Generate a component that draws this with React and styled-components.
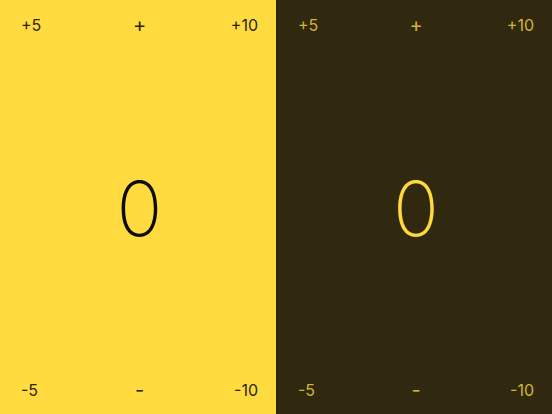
import React from "react";
import styled, { createGlobalStyle } from "styled-components";

const Global = createGlobalStyle`
  html, body {
    margin: 0;
    padding: 0;
  }
  body {
    font-family: Inter, "Noto Sans", sans-serif;
  }
`;

const Screen = styled.div`
  display: grid;
  grid-template-columns: 276px 276px;
  height: 414px;
  width: 552px;
  overflow: hidden;
`;

const Panel = styled.section`
  display: flex;
  flex-direction: column;
  justify-content: space-between;
  background: ${(p) => (p.dark ? "#30290f" : "#ffdb3f")};
  color: ${(p) => (p.dark ? "#d4b435" : "#2b2612")};
  border-left: ${(p) => (p.dark ? "1px solid #2a230b" : "none")};
  padding: 15px 18px 14px 21px;
`;

const Row = styled.div`
  display: grid;
  grid-template-columns: 1fr 1fr 1fr;
  align-items: center;
  font-size: 16px;
  line-height: 20px;
  span:nth-child(1) { justify-self: start; }
  span:nth-child(3) { justify-self: end; }
`;

const Mid = styled.span`
  justify-self: center;
  font-size: 20px;
  font-weight: 400;
`;

const Score = styled.div`
  text-align: center;
  font-size: 76px;
  font-weight: 200;
  line-height: 1;
  color: ${(p) => (p.dark ? "#ffd93c" : "#0d0b04")};
`;

function Counter({ dark }) {
  return (
    <Panel dark={dark}>
      <Row>
        <span>+5</span>
        <Mid>+</Mid>
        <span>+10</span>
      </Row>
      <Score dark={dark}>0</Score>
      <Row>
        <span>-5</span>
        <Mid>-</Mid>
        <span>-10</span>
      </Row>
    </Panel>
  );
}

export default function App() {
  return (
    <>
      <Global />
      <Screen>
        <Counter />
        <Counter dark />
      </Screen>
    </>
  );
}
